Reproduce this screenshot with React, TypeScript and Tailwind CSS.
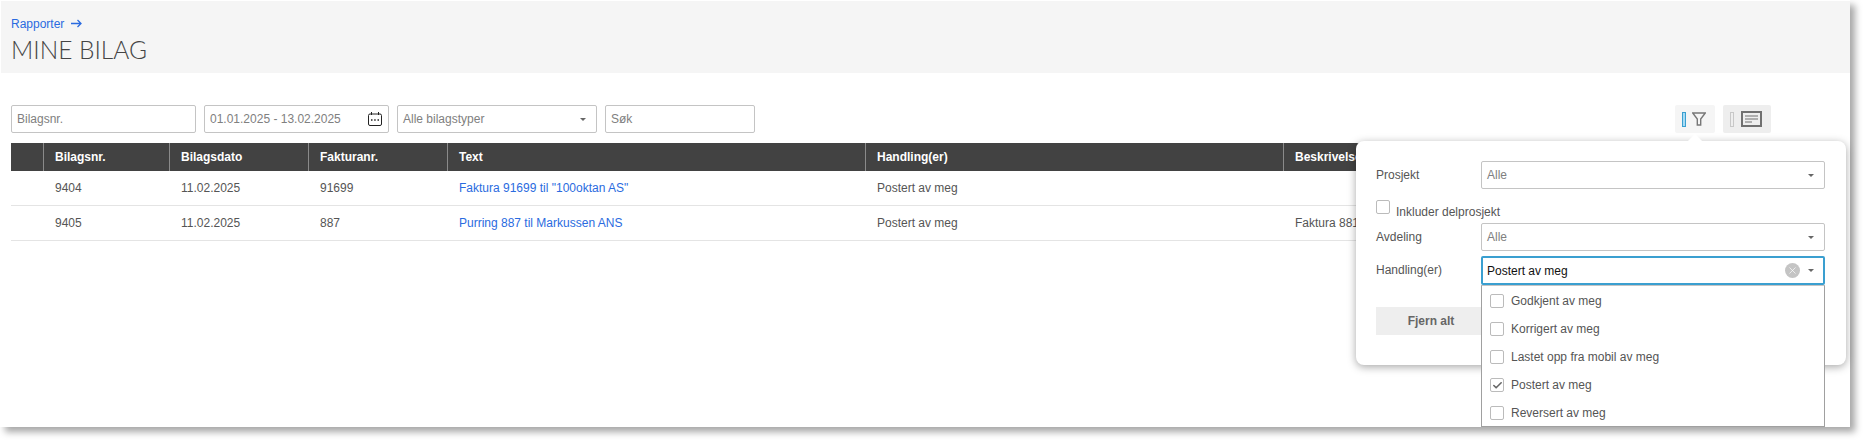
import { Check, X } from 'lucide-react';

const columns = [
  { label: '', width: 'w-[33px]' },
  { label: 'Bilagsnr.', width: 'w-[126px]' },
  { label: 'Bilagsdato', width: 'w-[139px]' },
  { label: 'Fakturanr.', width: 'w-[139px]' },
  { label: 'Text', width: 'w-[418px]' },
  { label: 'Handling(er)', width: 'w-[418px]' },
  { label: 'Beskrivelse', width: 'flex-1' },
];

const rows = [
  { nr: '9404', date: '11.02.2025', invoice: '91699', text: 'Faktura 91699 til "100oktan AS"', action: 'Postert av meg', note: '' },
  { nr: '9405', date: '11.02.2025', invoice: '887', text: 'Purring 887 til Markussen ANS', action: 'Postert av meg', note: 'Faktura 881' },
];

const options = [
  { label: 'Godkjent av meg', checked: false },
  { label: 'Korrigert av meg', checked: false },
  { label: 'Lastet opp fra mobil av meg', checked: false },
  { label: 'Postert av meg', checked: true },
  { label: 'Reversert av meg', checked: false },
];

const Caret = () => <span className="w-0 h-0 border-x-[3px] border-x-transparent border-t-[3px] border-t-[#666]" />;

const Select = ({ value }: { value: string }) => (
  <div className="flex items-center justify-between w-[344px] h-[28px] pl-[5px] pr-[10px] bg-white border border-[#c4c4c4] rounded-[2px] text-[#808080]">
    <span>{value}</span>
    <Caret />
  </div>
);

const Box = ({ checked }: { checked?: boolean }) => (
  <span className="flex items-center justify-center w-[14px] h-[14px] bg-white border border-[#bbb] rounded-[2px]">
    {checked && <Check size={11} strokeWidth={3.5} className="text-[#666]" />}
  </span>
);

const App = () => {
  return (
    <div className="w-[1864px] h-[440px] bg-white overflow-hidden font-['Liberation_Sans',Arial,sans-serif] text-[12px] text-[#555]">
      <div className="relative w-[1850px] h-[427px] bg-white shadow-[5px_5px_7px_rgba(0,0,0,0.35)] pt-[1px] pl-[1px]">
        {/* Header */}
        <div className="h-[72px] bg-[#f5f5f5] pl-[10px] pt-[15px]">
          <a className="flex items-center gap-[7px] h-[15px] text-[#2a6be0]">
            Rapporter
            <svg width="11" height="9" viewBox="0 0 11 9" fill="none" stroke="#2a6be0" strokeWidth="1.3">
              <path d="M0 4.5h10M6.5 1l3.5 3.5L6.5 8" />
            </svg>
          </a>
          <h1 className="mt-[4px] font-['Lato',sans-serif] font-light text-[24.5px] leading-[30px] text-[#444]">MINE BILAG</h1>
        </div>

        {/* Filters */}
        <div className="flex items-center mt-[32px] pl-[10px] h-[28px]">
          <div className="flex items-center w-[185px] h-[28px] pl-[5px] border border-[#c4c4c4] rounded-[2px] text-[#808080]">Bilagsnr.</div>
          <div className="flex items-center justify-between w-[185px] h-[28px] ml-[8px] pl-[5px] pr-[6px] border border-[#c4c4c4] rounded-[2px] text-[#808080]">
            <span>01.01.2025 - 13.02.2025</span>
            <svg width="14" height="14" viewBox="0 0 14 14" fill="none" stroke="#222" strokeWidth="1">
              <rect x="0.5" y="2" width="13" height="11.5" rx="1.5" />
              <path d="M3.5 0v3M10.5 0v3" />
              <path d="M3 8h1.5M6.2 8h1.5M9.5 8h1.5" strokeWidth="1.4" />
            </svg>
          </div>
          <div className="flex items-center justify-between w-[200px] h-[28px] ml-[8px] pl-[5px] pr-[10px] border border-[#c4c4c4] rounded-[2px] text-[#808080]">
            <span>Alle bilagstyper</span>
            <Caret />
          </div>
          <div className="flex items-center w-[150px] h-[28px] ml-[8px] pl-[5px] border border-[#c4c4c4] rounded-[2px] text-[#808080]">Søk</div>

          <div className="flex items-center gap-[6px] w-[40px] h-[28px] ml-[920px] pl-[7px] bg-[#f5f5f5] rounded-[2px]">
            <span className="w-[4px] h-[15px] bg-[#a8dcf5] border border-[#3a9fd0]" />
            <svg width="14" height="14" viewBox="0 0 14 14" fill="none" stroke="#777" strokeWidth="1.4">
              <path d="M.7 1h12.6L8.7 7v6H5.3V7z" />
            </svg>
          </div>
          <div className="flex items-center gap-[7px] w-[48px] h-[28px] ml-[8px] pl-[7px] bg-[#eeeeee] rounded-[2px]">
            <span className="w-[4px] h-[15px] bg-[#eee] border border-[#c8c8c8]" />
            <svg width="21" height="16" viewBox="0 0 21 16" fill="none" stroke="#707070">
              <rect x="1" y="1" width="19" height="14" strokeWidth="2" />
              <path d="M4 5h13M4 8h13M4 11h7" strokeWidth="1" />
            </svg>
          </div>
        </div>

        {/* Table */}
        <div className="mt-[10px] ml-[10px] mr-[9px]">
          <div className="flex h-[28px] bg-[#424242] text-white font-bold">
            {columns.map((col, i) => (
              <div key={i} className={`${col.width} flex items-center pl-[11px] border-r border-[#8a8a8a] last:border-r-0`}>
                {col.label}
              </div>
            ))}
          </div>
          {rows.map((row) => (
            <div key={row.nr} className="flex h-[35px] items-center border-b border-[#e4e4e4]">
              <div className="w-[33px]" />
              <div className="w-[126px] pl-[11px]">{row.nr}</div>
              <div className="w-[139px] pl-[11px]">{row.date}</div>
              <div className="w-[139px] pl-[11px]">{row.invoice}</div>
              <div className="w-[418px] pl-[11px] text-[#2a6be0]">{row.text}</div>
              <div className="w-[418px] pl-[11px]">{row.action}</div>
              <div className="flex-1 pl-[11px]">{row.note}</div>
            </div>
          ))}
        </div>

        {/* Filter popover */}
        <div className="absolute left-[1356px] top-[141px] w-[490px] h-[224px] bg-white rounded-[8px] shadow-[0_2px_8px_rgba(0,0,0,0.35)] pl-[20px] pt-[20px]">
          <span className="absolute left-[334px] top-[-5px] w-[10px] h-[10px] rotate-45 bg-white" />
          <div className="relative flex items-center h-[28px]">
            <span className="w-[105px]">Prosjekt</span>
            <Select value="Alle" />
          </div>
          <label className="relative flex items-start gap-[6px] h-[34px] pt-[11px]">
            <span className="flex w-[14px] h-[14px] border border-[#bbb] rounded-[2px]" />
            <span className="pt-[3px]">Inkluder delprosjekt</span>
          </label>
          <div className="flex items-center h-[28px]">
            <span className="w-[105px]">Avdeling</span>
            <Select value="Alle" />
          </div>
          <div className="flex items-start h-[28px] mt-[5px]">
            <span className="w-[105px] leading-[29px]">Handling(er)</span>
            <div className="flex items-center justify-between w-[344px] h-[29px] pl-[4px] pr-[9px] border-2 border-[#3a9fd0] rounded-[2px] text-[#111]">
              <span>Postert av meg</span>
              <span className="flex items-center gap-[8px]">
                <span className="flex items-center justify-center w-[15px] h-[15px] rounded-full bg-[#c4c4c4]">
                  <X size={11} strokeWidth={1.5} className="text-white" />
                </span>
                <Caret />
              </span>
            </div>
          </div>
          <button className="flex items-center justify-center w-[110px] h-[28px] mt-[23px] bg-[#eeeeee] font-bold text-[#666]">Fjern alt</button>

          {/* Dropdown list */}
          <div className="absolute left-[125px] top-[144px] w-[344px] h-[142px] pt-[1px] bg-white border border-[#a0a0a0] border-t-[#c4c4c4] overflow-hidden">
            {options.map((opt) => (
              <div key={opt.label} className="flex items-center gap-[7px] h-[28px] pl-[8px]">
                <Box checked={opt.checked} />
                <span>{opt.label}</span>
              </div>
            ))}
          </div>
        </div>
      </div>
    </div>
  );
};

export default App;
